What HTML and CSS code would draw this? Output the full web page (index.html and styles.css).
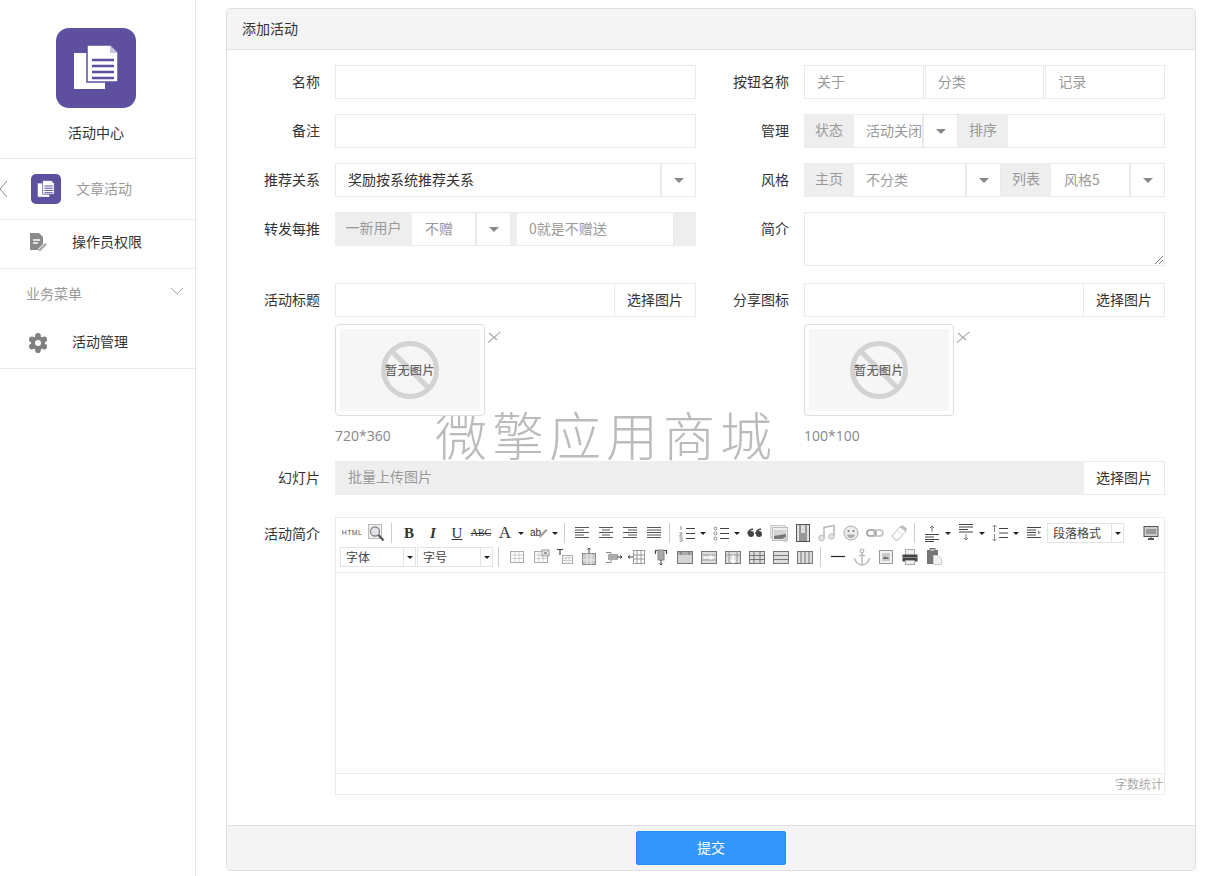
FILE: index.html
```html
<!DOCTYPE html>
<html lang="zh-CN">
<head>
  <meta charset="UTF-8">
  <meta name="viewport" content="width=device-width, initial-scale=1.0">
  <title>添加活动</title>
  <link rel="stylesheet" href="styles.css">
</head>
<body>
  <!-- editor icon sprite -->
  <svg class="sprite" xmlns="http://www.w3.org/2000/svg">
    <defs>
      <symbol id="i-preview" viewBox="0 0 20 20"><rect x="2.500" y="1.500" width="13" height="14" fill="#eee" stroke="#bbb"/><circle cx="9" cy="8.500" r="4.500" fill="#e4e4ea" stroke="#888" stroke-width="1.300"/><path d="M12.500 12l5 5.500" stroke="#555" stroke-width="2.200"/></symbol>
      <symbol id="i-left" viewBox="0 0 20 20"><path d="M3 4.500h14M3 7h9M3 9.500h14M3 12h9M3 14.500h14" stroke="#555"/></symbol>
      <symbol id="i-center" viewBox="0 0 20 20"><path d="M3 4.500h14M6 7h8M3 9.500h14M6 12h8M3 14.500h14" stroke="#555"/></symbol>
      <symbol id="i-right" viewBox="0 0 20 20"><path d="M3 4.500h14M8 7h9M3 9.500h14M8 12h9M3 14.500h14" stroke="#555"/></symbol>
      <symbol id="i-justify" viewBox="0 0 20 20"><path d="M3 4.500h14M3 7h14M3 9.500h14M3 12h14M3 14.500h14" stroke="#555"/></symbol>
      <symbol id="i-ol" viewBox="0 0 20 20"><path d="M9 5.500h9M9 10.500h9M9 15.500h9" stroke="#444"/><path d="M4 3v4M2.500 10h3l-3 3h3M2.500 15h3l-1.500 1.500 1.500 1.500h-3" fill="none" stroke="#888"/></symbol>
      <symbol id="i-ul" viewBox="0 0 20 20"><path d="M9 5.500h9M9 10.500h9M9 15.500h9" stroke="#444"/><circle cx="4.500" cy="5.500" r="1.500" fill="none" stroke="#888"/><circle cx="4.500" cy="10.500" r="1.500" fill="none" stroke="#888"/><circle cx="4.500" cy="15.500" r="1.500" fill="none" stroke="#888"/></symbol>
      <symbol id="i-quote" viewBox="0 0 20 20"><circle cx="6" cy="11" r="3" fill="#444"/><circle cx="14" cy="11" r="3" fill="#444"/><path d="M3 11q0-4 5-5M11 11q0-4 5-5" fill="none" stroke="#444" stroke-width="1.600"/></symbol>
      <symbol id="i-image" viewBox="0 0 20 20"><rect x="1.500" y="2.500" width="15" height="12" fill="#eee" stroke="#ccc"/><rect x="3.500" y="4.500" width="15" height="13" fill="#eee" stroke="#bbb"/><path d="M5 7h12v9H5z" fill="#777"/><path d="M5 7h12v4L5 13z" fill="#d4d4d4"/><circle cx="16.500" cy="16.500" r="2.500" fill="#ccc"/></symbol>
      <symbol id="i-video" viewBox="0 0 20 20"><rect x="3.500" y="1.500" width="13" height="17" fill="#ddd" stroke="#555"/><path d="M7 2v16M13 2v16" stroke="#555"/><path d="M7.500 10h5v8h-5z" fill="#999"/><path d="M4 4.500h2M4 7.500h2M4 10.500h2M4 13.500h2M4 16.500h2M14 4.500h2M14 7.500h2M14 10.500h2M14 13.500h2M14 16.500h2" stroke="#eee"/></symbol>
      <symbol id="i-music" viewBox="0 0 20 20"><path d="M7 15V4.500l10-2V13" fill="none" stroke="#bbb" stroke-width="1.600"/><circle cx="4.500" cy="15" r="2.800" fill="#e4e4e4" stroke="#bbb"/><circle cx="14.500" cy="13.500" r="2.800" fill="#e4e4e4" stroke="#bbb"/></symbol>
      <symbol id="i-emoji" viewBox="0 0 20 20"><circle cx="10" cy="10" r="7" fill="#ececec" stroke="#aaa"/><circle cx="7.500" cy="8" r="1" fill="#777"/><circle cx="12.500" cy="8" r="1" fill="#777"/><path d="M6 11.500h8q-1 3.500-4 3.500t-4-3.500z" fill="#aaa"/></symbol>
      <symbol id="i-link" viewBox="0 0 20 20"><rect x="2" y="7" width="9" height="6" rx="3" fill="none" stroke="#999" stroke-width="1.500"/><rect x="9" y="7" width="9" height="6" rx="3" fill="none" stroke="#bbb" stroke-width="1.500"/></symbol>
      <symbol id="i-eraser" viewBox="0 0 20 20"><path d="M3 13l8-9 6 4-8 9H6z" fill="#fff" stroke="#bbb"/><path d="M11 4l2-2 5 3.500-1 2.500z" fill="#bbb"/><path d="M8 8l6 4" stroke="#ddd"/></symbol>
      <symbol id="i-rowbefore" viewBox="0 0 20 20"><path d="M10 3v6M8 5l2-2 2 2" fill="none" stroke="#777"/><path d="M3 11.500h14M3 14h9M3 16.500h14M3 18.500h9" stroke="#444"/></symbol>
      <symbol id="i-rowafter" viewBox="0 0 20 20"><path d="M3 1.500h14M3 4h14M3 6.500h9M3 9h14" stroke="#444"/><path d="M10 11v6M8 15l2 2 2-2" fill="none" stroke="#777"/></symbol>
      <symbol id="i-lineheight" viewBox="0 0 20 20"><path d="M9 5.500h9M9 10h9M9 14.500h9" stroke="#444"/><path d="M4.500 2v7M2.500 4l2-2 2 2M4.500 11v7M2.500 16l2 2 2-2" fill="none" stroke="#888"/></symbol>
      <symbol id="i-indent" viewBox="0 0 20 20"><path d="M3 4.500h14M3 7h9M3 9.500h9M3 12h9M3 14.500h14" stroke="#444"/><path d="M14 7.500l3 2-3 2z" fill="#999"/></symbol>
      <symbol id="i-screen" viewBox="0 0 20 20"><rect x="3" y="3.500" width="14" height="10" fill="#ccc" stroke="#555"/><path d="M5 6h10v5H5z" fill="#999"/><path d="M7 16h6" stroke="#555" stroke-width="2"/><path d="M9.500 14h1v2h-1z" fill="#555"/></symbol>
      <symbol id="i-table" viewBox="0 0 20 20"><rect x="3.500" y="4.500" width="13" height="11" fill="#fff" stroke="#aaa"/><path d="M3.500 8h13M3.500 11.500h13M8 4.500v11M12 4.500v11" stroke="#ccc"/></symbol>
      <symbol id="i-tabledel" viewBox="0 0 20 20"><rect x="3.500" y="4.500" width="13" height="11" fill="#fff" stroke="#aaa"/><path d="M3.500 8h13M3.500 11.500h13M8 4.500v11M12 4.500v11" stroke="#ccc"/><rect x="11" y="3" width="7" height="6" fill="#eee" stroke="#999"/><path d="M13 4.500l3 3M16 4.500l-3 3" stroke="#666"/></symbol>
      <symbol id="i-caption" viewBox="0 0 20 20"><path d="M2 2.500h6M5 2.500V8" stroke="#444" stroke-width="1.200"/><rect x="7.500" y="8.500" width="10" height="8" fill="#fff" stroke="#aaa"/><path d="M7.500 11h10M7.500 13.500h10M11 8.500v8M14 8.500v8" stroke="#ccc"/></symbol>
      <symbol id="i-insrow" viewBox="0 0 20 20"><path d="M10 1v5M8.500 2.500L10 1l1.500 1.500" fill="none" stroke="#444"/><rect x="3.500" y="6.500" width="13" height="11" fill="#ccc" stroke="#888"/><path d="M3.500 13h13M8 6.500v11M12 6.500v11" stroke="#eee"/></symbol>
      <symbol id="i-inscol" viewBox="0 0 20 20"><path d="M3 5.500h5v10H3" fill="none" stroke="#888"/><rect x="5" y="7" width="10" height="6" fill="#aaa"/><path d="M14 10h5M17 8.500l2 1.500-2 1.500" fill="none" stroke="#444"/></symbol>
      <symbol id="i-inscol2" viewBox="0 0 20 20"><path d="M1 10h6M3 8.500L1 10l2 1.500" fill="none" stroke="#444"/><rect x="6.500" y="3.500" width="11" height="13" fill="#fff" stroke="#999"/><path d="M10 3.500v13M14 3.500v13M6.500 8h11M6.500 12h11" stroke="#999"/></symbol>
      <symbol id="i-delcol" viewBox="0 0 20 20"><path d="M4.500 3v4M15.500 3v4M4.500 3.500H7M13 3.500h2.500" stroke="#444" stroke-width="1.200"/><rect x="7" y="3" width="6" height="10" fill="#aaa" stroke="#888"/><path d="M10 13v5M8.500 16.500L10 18l1.500-1.500" fill="none" stroke="#444"/></symbol>
      <symbol id="i-merge" viewBox="0 0 20 20"><rect x="2.500" y="4.500" width="15" height="12" fill="#d4d4d4" stroke="#777"/><path d="M3 5h14v3H3z" fill="#aaa"/><path d="M6 4.500v3.500M14 4.500v3.500" stroke="#777"/></symbol>
      <symbol id="i-mergeright" viewBox="0 0 20 20"><rect x="2.500" y="4.500" width="15" height="12" fill="#ddd" stroke="#777"/><path d="M2.500 8h15M2.500 13h15" stroke="#999"/><path d="M5 10.500h8M11 8.500l3 2-3 2" fill="none" stroke="#fff" stroke-width="1.500"/></symbol>
      <symbol id="i-mergedown" viewBox="0 0 20 20"><rect x="2.500" y="4.500" width="15" height="12" fill="#ddd" stroke="#777"/><path d="M2.500 8h15M6 4.500v12M14 4.500v12" stroke="#999"/><path d="M10 8v7M8 13l2 2.500 2-2.500" fill="none" stroke="#fff" stroke-width="1.500"/></symbol>
      <symbol id="i-split" viewBox="0 0 20 20"><rect x="2.500" y="4.500" width="15" height="12" fill="#ddd" stroke="#777"/><path d="M2.500 8.500h15M2.500 12.500h15M7 4.500v12M13 4.500v12" stroke="#777"/></symbol>
      <symbol id="i-splitrow" viewBox="0 0 20 20"><rect x="2.500" y="4.500" width="15" height="12" fill="#ddd" stroke="#777"/><path d="M2.500 8.500h15M2.500 12.500h15" stroke="#777"/></symbol>
      <symbol id="i-splitcol" viewBox="0 0 20 20"><rect x="2.500" y="4.500" width="15" height="12" fill="#ddd" stroke="#777"/><path d="M6 4.500v12M10 4.500v12M14 4.500v12" stroke="#777"/></symbol>
      <symbol id="i-hr" viewBox="0 0 20 20"><path d="M3 9.500h14" stroke="#222" stroke-width="1.200"/></symbol>
      <symbol id="i-anchor" viewBox="0 0 20 20"><circle cx="10" cy="4" r="1.800" fill="none" stroke="#bbb" stroke-width="1.300"/><path d="M10 6v12M7 8.500h6M2.500 11q1 6 7.500 7 6.500-1 7.500-7" fill="none" stroke="#bbb" stroke-width="1.500"/></symbol>
      <symbol id="i-picture" viewBox="0 0 20 20"><rect x="3.500" y="3.500" width="13" height="13" fill="#f0f0f0" stroke="#999"/><rect x="6" y="6" width="8" height="8" fill="#ccc"/><path d="M7 12l2-3 1.500 2 1-1 1.500 2z" fill="#666"/></symbol>
      <symbol id="i-print" viewBox="0 0 20 20"><rect x="5.500" y="2.500" width="9" height="6" fill="#eee" stroke="#aaa"/><rect x="2.500" y="7.500" width="15" height="7" fill="#444"/><path d="M3 10.500h14" stroke="#888"/><rect x="5.500" y="13.500" width="9" height="4" fill="#eee" stroke="#aaa"/></symbol>
      <symbol id="i-paste" viewBox="0 0 20 20"><rect x="3" y="3" width="11" height="14" fill="#777"/><rect x="6" y="1.500" width="5" height="3" fill="#bbb" stroke="#777"/><path d="M9.500 8.500h5l3 3v6h-8z" fill="#f0f0f0" stroke="#ccc"/></symbol>
    </defs>
  </svg>

  <div class="page">
    <aside class="sidebar">
      <div class="app-head">
        <div class="app-logo">
          <svg viewBox="0 0 80 80" width="80" height="80"><path d="M18 25h31v36H18z" fill="#fff"/><path d="M31 17h23l8 8v29H31z" fill="#fff" stroke="#5f4f9f" stroke-width="1.500"/><path d="M54 17v8h8" fill="#c9c3e0"/><path d="M36 32h22M36 38h22M36 44h22M36 50h22" stroke="#5f4f9f" stroke-width="2.600"/></svg>
        </div>
        <div class="app-name">活动中心</div>
      </div>
      <div class="nav-row nav-row-current">
        <svg class="nav-back" viewBox="0 0 8 18" width="8" height="18"><path d="M7 1L0 9l7 8" fill="none" stroke="#888"/></svg>
        <div class="nav-badge">
          <svg viewBox="0 0 80 80" width="30" height="30"><path d="M18 25h31v36H18z" fill="#fff"/><path d="M31 17h23l8 8v29H31z" fill="#fff" stroke="#5f4f9f" stroke-width="2"/><path d="M36 32h22M36 38h22M36 44h22M36 50h22" stroke="#5f4f9f" stroke-width="3"/></svg>
        </div>
        <span class="nav-current-text">文章活动</span>
      </div>
      <div class="nav-row nav-row-plain">
        <svg class="nav-icon" viewBox="0 0 20 20" width="20" height="20"><path d="M2 1h9l4 4v7l-5 5v1H2z" fill="#8a8a8a"/><path d="M5 8h7M5 11h5" stroke="#fff" stroke-width="1.500"/><path d="M10 18l7-7 2 1.500-7 7z" fill="#aaa"/></svg>
        <span class="nav-text">操作员权限</span>
      </div>
      <div class="nav-group">
        <div class="nav-group-title">
          <span>业务菜单</span>
          <svg viewBox="0 0 14 8" width="14" height="8"><path d="M1 1l6 6 6-6" fill="none" stroke="#aaa"/></svg>
        </div>
        <div class="nav-row nav-row-plain nav-row-sub">
          <svg class="nav-icon" viewBox="0 0 20 20" width="20" height="20"><g fill="#808080"><circle cx="10" cy="2.800" r="2.800"/><circle cx="10" cy="17.200" r="2.800"/><circle cx="3.800" cy="6.400" r="2.800"/><circle cx="16.200" cy="6.400" r="2.800"/><circle cx="3.800" cy="13.600" r="2.800"/><circle cx="16.200" cy="13.600" r="2.800"/><circle cx="10" cy="10" r="7"/></g><circle cx="10" cy="10" r="3" fill="#fff"/></svg>
          <span class="nav-text">活动管理</span>
        </div>
      </div>
    </aside>

    <main class="main">
      <form class="panel">
        <div class="panel-heading">添加活动</div>
        <div class="watermark">微擎应用商城</div>
        <div class="panel-body">
          <div class="form-row">
            <div class="field">
              <label class="field-label">名称</label>
              <div class="field-box"><div class="input"></div></div>
            </div>
            <div class="field">
              <label class="field-label">按钮名称</label>
              <div class="field-box btn-names">
                <div class="input muted">关于</div>
                <div class="input muted">分类</div>
                <div class="input muted">记录</div>
              </div>
            </div>
          </div>

          <div class="form-row">
            <div class="field">
              <label class="field-label">备注</label>
              <div class="field-box"><div class="input"></div></div>
            </div>
            <div class="field">
              <label class="field-label">管理</label>
              <div class="field-box group">
                <div class="addon">状态</div>
                <div class="cell muted w-68 nowrap">活动关闭</div>
                <div class="caret-cell"><i class="caret"></i></div>
                <div class="addon">排序</div>
                <div class="cell grow"></div>
              </div>
            </div>
          </div>

          <div class="form-row">
            <div class="field">
              <label class="field-label">推荐关系</label>
              <div class="field-box group">
                <div class="cell grow dark">奖励按系统推荐关系</div>
                <div class="caret-cell"><i class="caret"></i></div>
              </div>
            </div>
            <div class="field">
              <label class="field-label">风格</label>
              <div class="field-box group">
                <div class="addon">主页</div>
                <div class="cell muted w-111">不分类</div>
                <div class="caret-cell"><i class="caret"></i></div>
                <div class="addon">列表</div>
                <div class="cell muted grow pad-13">风格5</div>
                <div class="caret-cell"><i class="caret"></i></div>
              </div>
            </div>
          </div>

          <div class="form-row form-row-tall">
            <div class="field">
              <label class="field-label">转发每推</label>
              <div class="field-box group">
                <div class="addon addon-wide">一新用户</div>
                <div class="cell muted w-63 pad-13">不赠</div>
                <div class="caret-cell"><i class="caret"></i></div>
                <div class="addon addon-gap"></div>
                <div class="cell muted grow">0就是不赠送</div>
                <div class="addon addon-end"></div>
              </div>
            </div>
            <div class="field">
              <label class="field-label">简介</label>
              <div class="field-box">
                <div class="textarea">
                  <svg viewBox="0 0 9 9" width="9" height="9"><path d="M9 1L1 9M9 5L5 9" stroke="#777"/></svg>
                </div>
              </div>
            </div>
          </div>

          <div class="form-row">
            <div class="field">
              <label class="field-label">活动标题</label>
              <div class="field-box">
                <div class="group">
                  <div class="cell grow"></div>
                  <div class="pick-btn">选择图片</div>
                </div>
                <div class="thumb-wrap">
                  <div class="thumb">
                    <div class="thumb-inner">
                      <span class="no-pic"><span class="no-pic-slash"></span><b>暂无图片</b></span>
                    </div>
                  </div>
                  <svg class="thumb-del" viewBox="0 0 14 12" width="14" height="12"><path d="M1 11.500L13.500 1" stroke="#bbb" stroke-width="1.500"/><path d="M2 2l8 7" stroke="#aaa" stroke-width="1.200"/></svg>
                </div>
                <div class="thumb-hint">720*360</div>
              </div>
            </div>
            <div class="field">
              <label class="field-label">分享图标</label>
              <div class="field-box">
                <div class="group">
                  <div class="cell grow"></div>
                  <div class="pick-btn">选择图片</div>
                </div>
                <div class="thumb-wrap">
                  <div class="thumb">
                    <div class="thumb-inner">
                      <span class="no-pic"><span class="no-pic-slash"></span><b>暂无图片</b></span>
                    </div>
                  </div>
                  <svg class="thumb-del" viewBox="0 0 14 12" width="14" height="12"><path d="M1 11.500L13.500 1" stroke="#bbb" stroke-width="1.500"/><path d="M2 2l8 7" stroke="#aaa" stroke-width="1.200"/></svg>
                </div>
                <div class="thumb-hint">100*100</div>
              </div>
            </div>
          </div>

          <div class="form-row form-row-wide">
            <label class="field-label">幻灯片</label>
            <div class="field-box group">
              <div class="addon addon-fill">批量上传图片</div>
              <div class="pick-btn">选择图片</div>
            </div>
          </div>

          <div class="form-row form-row-wide form-row-editor">
            <label class="field-label">活动简介</label>
            <div class="field-box editor">
              <div class="toolbar">
                <div class="tool-line">
                  <span class="tool tool-html">HTML</span>
                  <svg class="tool"><use href="#i-preview"/></svg>
                  <i class="tool-sep"></i>
                  <span class="tool tool-b">B</span>
                  <span class="tool tool-i">I</span>
                  <span class="tool tool-u">U</span>
                  <span class="tool tool-s">ABC</span>
                  <span class="tool-split"><span class="tool tool-a">A</span><i class="mini-caret"></i></span>
                  <span class="tool-split"><span class="tool tool-ab">ab<svg viewBox="0 0 10 12" width="10" height="12"><path d="M1 11l1-3 6-6 1.500 1.500-6 6z" fill="#999"/></svg></span><i class="mini-caret"></i></span>
                  <i class="tool-sep"></i>
                  <svg class="tool"><use href="#i-left"/></svg>
                  <svg class="tool"><use href="#i-center"/></svg>
                  <svg class="tool"><use href="#i-right"/></svg>
                  <svg class="tool"><use href="#i-justify"/></svg>
                  <i class="tool-sep"></i>
                  <span class="tool-split"><svg class="tool"><use href="#i-ol"/></svg><i class="mini-caret"></i></span>
                  <span class="tool-split"><svg class="tool"><use href="#i-ul"/></svg><i class="mini-caret"></i></span>
                  <svg class="tool"><use href="#i-quote"/></svg>
                  <svg class="tool"><use href="#i-image"/></svg>
                  <svg class="tool"><use href="#i-video"/></svg>
                  <svg class="tool"><use href="#i-music"/></svg>
                  <svg class="tool"><use href="#i-emoji"/></svg>
                  <svg class="tool"><use href="#i-link"/></svg>
                  <svg class="tool"><use href="#i-eraser"/></svg>
                  <i class="tool-sep"></i>
                  <span class="tool-split"><svg class="tool"><use href="#i-rowbefore"/></svg><i class="mini-caret"></i></span>
                  <span class="tool-split"><svg class="tool"><use href="#i-rowafter"/></svg><i class="mini-caret"></i></span>
                  <span class="tool-split"><svg class="tool"><use href="#i-lineheight"/></svg><i class="mini-caret"></i></span>
                  <svg class="tool"><use href="#i-indent"/></svg>
                  <span class="tool-select tool-select-para"><span class="tool-select-text">段落格式</span><span class="tool-select-arrow"><i class="mini-caret"></i></span></span>
                  <svg class="tool tool-end"><use href="#i-screen"/></svg>
                </div>
                <div class="tool-line">
                  <span class="tool-select"><span class="tool-select-text">字体</span><span class="tool-select-arrow"><i class="mini-caret"></i></span></span>
                  <span class="tool-select"><span class="tool-select-text">字号</span><span class="tool-select-arrow"><i class="mini-caret"></i></span></span>
                  <i class="tool-sep tool-sep-narrow"></i>
                  <svg class="tool"><use href="#i-table"/></svg>
                  <svg class="tool"><use href="#i-tabledel"/></svg>
                  <svg class="tool"><use href="#i-caption"/></svg>
                  <svg class="tool"><use href="#i-insrow"/></svg>
                  <svg class="tool"><use href="#i-inscol"/></svg>
                  <svg class="tool"><use href="#i-inscol2"/></svg>
                  <svg class="tool"><use href="#i-delcol"/></svg>
                  <svg class="tool"><use href="#i-merge"/></svg>
                  <svg class="tool"><use href="#i-mergeright"/></svg>
                  <svg class="tool"><use href="#i-mergedown"/></svg>
                  <svg class="tool"><use href="#i-split"/></svg>
                  <svg class="tool"><use href="#i-splitrow"/></svg>
                  <svg class="tool"><use href="#i-splitcol"/></svg>
                  <i class="tool-sep"></i>
                  <svg class="tool"><use href="#i-hr"/></svg>
                  <svg class="tool"><use href="#i-anchor"/></svg>
                  <svg class="tool"><use href="#i-picture"/></svg>
                  <svg class="tool"><use href="#i-print"/></svg>
                  <svg class="tool"><use href="#i-paste"/></svg>
                </div>
              </div>
              <div class="editor-body"></div>
              <div class="editor-foot">字数统计</div>
            </div>
          </div>
        </div>
        <div class="panel-footer">
          <button type="button" class="submit-btn">提交</button>
        </div>
      </form>
    </main>
  </div>
</body>
</html>
```

FILE: styles.css
```css
* {
  margin: 0;
  padding: 0;
  box-sizing: border-box;
}

body {
  background: #fff;
  color: #333;
  font-family: "Noto Sans CJK SC", "Noto Sans", sans-serif;
  font-size: 14px;
  line-height: 18px;
  overflow: hidden;
}

.sprite {
  display: none;
}

.page {
  display: flex;
  height: 876px;
}

/* sidebar */
.sidebar {
  width: 196px;
  flex: none;
  border-right: 1px solid #e7e7e7;
}

.app-head {
  height: 159px;
  padding: 28px 3px 0 0;
  border-bottom: 1px solid #e7e7e7;
  text-align: center;
}

.app-logo {
  width: 80px;
  height: 80px;
  margin: 0 auto;
  background: #5f4f9f;
  border-radius: 13px;
}

.app-logo svg,
.nav-badge svg {
  display: block;
}

.app-name {
  margin-top: 15px;
  color: #333;
}

.nav-row {
  display: flex;
  align-items: center;
}

.nav-row-current {
  height: 61px;
  border-bottom: 1px solid #e7e7e7;
}

.nav-back {
  flex: none;
  margin-right: 23px;
}

.nav-badge {
  width: 30px;
  height: 30px;
  background: #5f4f9f;
  border-radius: 5px;
}

.nav-current-text {
  margin: 0 0 2px 15px;
  color: #999;
}

.nav-row-plain {
  height: 49px;
  padding: 0 0 4px 28px;
  border-bottom: 1px solid #e7e7e7;
  color: #333;
}

.nav-text {
  margin-bottom: 2px;
}

.nav-icon {
  flex: none;
  margin-right: 24px;
}

.nav-group {
  border-bottom: 1px solid #e7e7e7;
}

.nav-group-title {
  display: flex;
  justify-content: space-between;
  height: 50px;
  padding: 15px 11px 0 26px;
  color: #999;
}

.nav-group-title svg {
  margin-top: 3px;
}

.nav-row-sub {
  border-bottom: 0;
  padding-bottom: 1px;
}

.nav-row-sub .nav-text {
  margin-bottom: 4px;
}

/* main panel */
.main {
  flex: 1;
  padding: 8px 10px 0 30px;
}

.panel {
  position: relative;
  display: flex;
  flex-direction: column;
  height: 863px;
  border: 1px solid #e0e0e0;
  border-radius: 4px;
  overflow: hidden;
}

.panel-heading {
  height: 41px;
  padding: 10px 15px;
  background: #f4f4f4;
  border-bottom: 1px solid #e0e0e0;
}

.panel-body {
  flex: 1;
  padding: 15px 30px 0 0;
}

.panel-footer {
  display: flex;
  justify-content: center;
  height: 45px;
  padding-top: 5px;
  background: #f4f4f4;
  border-top: 1px solid #e0e0e0;
}

.submit-btn {
  width: 150px;
  height: 34px;
  padding-bottom: 2px;
  background: #3296fa;
  border: 1px solid #2a8cf0;
  border-radius: 2px;
  color: #fff;
  font: inherit;
}

.watermark {
  position: absolute;
  top: 390px;
  left: 208px;
  color: #bbb;
  font-size: 52px;
  font-weight: 300;
  letter-spacing: 5px;
  line-height: 70px;
  white-space: nowrap;
}

/* form rows */
.form-row {
  position: relative;
  display: flex;
  margin-bottom: 15px;
}

.form-row-tall {
  margin-bottom: 17px;
}

.form-row-editor {
  margin-top: 22px;
  margin-bottom: 0;
}

.field {
  display: flex;
  align-items: flex-start;
  flex: 1;
}

.form-row-wide {
  align-items: flex-start;
}

.field-label {
  flex: none;
  width: 93px;
  margin-right: 15px;
  text-align: right;
  color: #333;
  line-height: 32px;
}

.form-row-wide .field-box {
  width: 830px;
}

.field-box {
  width: 361px;
  flex: none;
}

.input,
.cell,
.caret-cell,
.pick-btn {
  height: 34px;
  background: #fff;
  border: 1px solid #e9e9e9;
}

.input {
  padding: 6px 12px;
}

.muted {
  color: #999;
}

.dark {
  color: #333;
}

.nowrap {
  white-space: nowrap;
  overflow: hidden;
}

.btn-names {
  display: flex;
  gap: 1px;
}

.btn-names .input {
  flex: 1;
}

.group {
  display: flex;
  position: relative;
  z-index: 1;
}

.addon {
  flex: none;
  width: 50px;
  height: 34px;
  padding: 6px 0;
  background: #eee;
  color: #999;
  text-align: center;
}

.addon-wide {
  width: 77px;
}

.addon-gap {
  width: 6px;
  padding: 0;
}

.addon-end {
  width: 22px;
  padding: 0;
}

.addon-fill {
  flex: 1;
  padding: 6px 13px;
  text-align: left;
}

.cell {
  flex: none;
  padding: 6px 12px;
  border-left: 0;
}

.pad-13 {
  padding-left: 13px;
}

.grow {
  flex: 1;
}

.group > .cell:first-child {
  border-left: 1px solid #e9e9e9;
}

.w-68 {
  width: 69px;
}

.w-111 {
  width: 112px;
}

.w-63 {
  width: 64px;
}

.caret-cell {
  display: flex;
  align-items: center;
  justify-content: center;
  flex: none;
  width: 35px;
  border-left: 1px solid #e9e9e9;
}

.caret {
  border-top: 5px solid #888;
  border-left: 5px solid transparent;
  border-right: 5px solid transparent;
}

.pick-btn {
  flex: none;
  width: 81px;
  padding: 6px 0;
  border-left: 0;
  text-align: center;
  color: #333;
}

.textarea {
  position: relative;
  height: 54px;
  border: 1px solid #e9e9e9;
}

.textarea svg {
  position: absolute;
  right: 1px;
  bottom: 1px;
}

/* picture preview */
.thumb-wrap {
  position: relative;
  width: 150px;
  margin-top: 7px;
}

.thumb {
  height: 92px;
  padding: 4px;
  border: 1px solid #ddd;
  border-radius: 4px;
  background: #fff;
}

.thumb-inner {
  display: flex;
  align-items: center;
  justify-content: center;
  height: 82px;
  background: #f6f6f6;
}

.no-pic {
  position: relative;
  display: flex;
  align-items: center;
  justify-content: center;
  width: 58px;
  height: 58px;
  border: 5px solid #d3d3d3;
  border-radius: 50%;
}

.no-pic-slash {
  position: absolute;
  left: -2px;
  top: 21px;
  width: 52px;
  height: 5px;
  background: #d3d3d3;
  transform: rotate(45deg);
}

.no-pic b {
  position: relative;
  flex: none;
  color: #666;
  font-size: 12px;
  font-weight: 500;
  letter-spacing: 0.5px;
}

.thumb-del {
  position: absolute;
  top: 7px;
  left: 152px;
}

.thumb-hint {
  margin-top: 10px;
  color: #888;
  font-family: "Open Sans", "Noto Sans", sans-serif;
  font-size: 14px;
  line-height: 20px;
}

/* editor */
.editor {
  border: 1px solid #ebebeb;
  height: 278px;
  display: flex;
  flex-direction: column;
  background: #fff;
  position: relative;
  z-index: 1;
}

.toolbar {
  height: 55px;
  padding: 3px 4px 0;
  border-bottom: 1px solid #ebebeb;
}

.tool-line {
  display: flex;
  align-items: center;
  height: 24px;
}

.tool {
  display: block;
  flex: none;
  width: 24px;
  height: 20px;
  text-align: center;
  line-height: 20px;
  color: #333;
}

.tool-html {
  font-family: "Liberation Sans", sans-serif;
  font-size: 7px;
  letter-spacing: 0.4px;
  color: #555;
}

.tool-b,
.tool-i,
.tool-u,
.tool-s,
.tool-a {
  font-family: "Liberation Serif", serif;
  font-size: 15px;
}

.tool-b {
  font-weight: bold;
}

.tool-i {
  font-style: italic;
  font-weight: bold;
}

.tool-u {
  text-decoration: underline;
}

.tool-s {
  font-size: 10px;
  text-decoration: line-through;
}

.tool-a {
  font-size: 17px;
}

.tool-ab {
  display: flex;
  align-items: center;
  justify-content: center;
  font-family: "Liberation Sans", sans-serif;
  font-size: 10px;
}

.tool-ab svg {
  margin-left: -3px;
}

.tool-split {
  display: flex;
  align-items: center;
  flex: none;
  width: 34px;
}

.mini-caret {
  display: block;
  margin-left: 1px;
  border-top: 3px solid #222;
  border-left: 3px solid transparent;
  border-right: 3px solid transparent;
}

.tool-sep {
  flex: none;
  width: 1px;
  height: 20px;
  margin: 0 5px 0 3px;
  background: #ccc;
}

.tool-sep-narrow {
  margin: 0 6px 0 4px;
}

.tool-end {
  margin-left: 14px;
}

.tool-select {
  display: flex;
  flex: none;
  height: 20px;
  margin-right: 1px;
}

.tool-select-para {
  margin-left: 1px;
}

.tool-select-text {
  width: 64px;
  padding-left: 5px;
  border: 1px solid #e4e4e4;
  font-size: 12px;
  line-height: 18px;
  color: #444;
}

.tool-select-para .tool-select-text {
  width: 65px;
}

.tool-select-arrow {
  display: flex;
  align-items: center;
  justify-content: center;
  width: 12px;
  border: 1px solid #e4e4e4;
  border-left: 0;
}

.tool-select-arrow .mini-caret {
  margin-left: 0;
}

.editor-body {
  flex: 1;
}

.editor-foot {
  height: 21px;
  border-top: 1px solid #ebebeb;
  padding-right: 1px;
  text-align: right;
  color: #aaa;
  font-size: 12px;
  line-height: 19px;
}
```
